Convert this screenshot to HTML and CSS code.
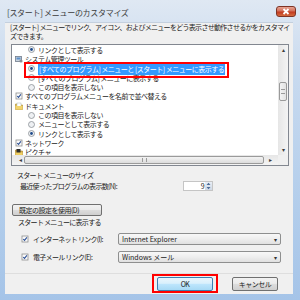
FILE: index.html
```html
<!DOCTYPE html>
<html lang="ja">
<head>
    <meta charset="UTF-8" />
    <title>[スタート] メニューのカスタマイズ</title>
    <link rel="stylesheet" href="styles.css">
</head>
<body>
    <div class="window">
        <div class="titlebar">
            <span class="title">[スタート] メニューのカスタマイズ</span>
            <span class="close">
                <svg viewBox="0 0 20 11" width="20" height="11"><path d="M7.5 3l5 5M12.5 3l-5 5" stroke="#fff" stroke-width="1.8"/></svg>
            </span>
        </div>

        <div class="client">
            <p class="desc">[スタート] メニューでリンク、アイコン、およびメニューをどう表示させ動作させるかをカスタマイ<br>ズできます。</p>

            <div class="listbox">
                <div class="list-main">
                    <div class="rows">
                        <div class="row sub"><svg class="radio" viewBox="0 0 7 7"><circle cx="3.5" cy="3.5" r="3" class="r-ring"/><circle cx="3.5" cy="3.5" r="1.4" class="r-dot"/></svg>リンクとして表示する</div>
                        <div class="row top">
                            <svg class="ico" viewBox="0 0 8 8"><rect x="0.5" y="1.5" width="6" height="5" fill="#c9d3de" stroke="#6f7c8c" stroke-width=".8"/><rect x="1.5" y="2.5" width="4" height="2" fill="#5c8fc9"/><circle cx="6" cy="6" r="1.6" fill="#8a8f96"/></svg>
                            システム管理ツール
                        </div>
                        <div class="row sub"><svg class="radio" viewBox="0 0 7 7"><circle cx="3.5" cy="3.5" r="3" class="r-ring"/><circle cx="3.5" cy="3.5" r="1.4" class="r-dot"/></svg><span class="sel">[すべてのプログラム] メニューと [スタート] メニューに表示する</span></div>
                        <div class="row sub"><svg class="radio" viewBox="0 0 7 7"><circle cx="3.5" cy="3.5" r="3" class="r-ring"/></svg>[すべてのプログラム] メニューに表示する</div>
                        <div class="row sub"><svg class="radio" viewBox="0 0 7 7"><circle cx="3.5" cy="3.5" r="3" class="r-ring"/></svg>この項目を表示しない</div>
                        <div class="row top"><svg class="ico" viewBox="0 0 8 8"><rect x="1" y="1" width="6" height="6" fill="#fafafa" stroke="#8e8f8f" stroke-width=".8"/><path d="M2.2 4l1.3 1.4 2.4-3" fill="none" stroke="#2a4f95" stroke-width="1.1"/></svg>すべてのプログラムメニューを名前で並べ替える</div>
                        <div class="row top"><svg class="ico" viewBox="0 0 8 8"><path d="M0.5 2h3l1 1h3v4.5h-7z" fill="#e8c65a" stroke="#b08a2a" stroke-width=".6"/><rect x="2" y="1" width="4" height="4" fill="#fff" stroke="#9aa" stroke-width=".4"/><path d="M0.5 4h7v3.5h-7z" fill="#f2d46e"/></svg>ドキュメント</div>
                        <div class="row sub"><svg class="radio" viewBox="0 0 7 7"><circle cx="3.5" cy="3.5" r="3" class="r-ring"/></svg>この項目を表示しない</div>
                        <div class="row sub"><svg class="radio" viewBox="0 0 7 7"><circle cx="3.5" cy="3.5" r="3" class="r-ring"/></svg>メニューとして表示する</div>
                        <div class="row sub"><svg class="radio" viewBox="0 0 7 7"><circle cx="3.5" cy="3.5" r="3" class="r-ring"/><circle cx="3.5" cy="3.5" r="1.4" class="r-dot"/></svg>リンクとして表示する</div>
                        <div class="row top"><svg class="ico" viewBox="0 0 8 8"><rect x="1" y="1" width="6" height="6" fill="#fafafa" stroke="#8e8f8f" stroke-width=".8"/><path d="M2.2 4l1.3 1.4 2.4-3" fill="none" stroke="#2a4f95" stroke-width="1.1"/></svg>ネットワーク</div>
                        <div class="row top"><svg class="ico" viewBox="0 0 8 8"><path d="M0.5 2h3l1 1h3v4.5h-7z" fill="#e2b94a" stroke="#a07a20" stroke-width=".6"/><rect x="1.5" y="1" width="4" height="4" fill="#2b2b2b"/><path d="M0.5 4.5h7v3h-7z" fill="#f0cf62"/></svg>ピクチャ</div>
                        <div class="mark mark-row"></div>
                    </div>
                    <div class="vscroll">
                        <span class="arrow">▴</span>
                        <div class="vtrack"><div class="vthumb"><i></i></div></div>
                        <span class="arrow">▾</span>
                    </div>
                </div>
                <div class="hscroll">
                    <span class="arrow">◂</span>
                    <div class="hthumb"><i></i></div>
                    <span class="arrow">▸</span>
                    <span class="corner"></span>
                </div>
            </div>

            <div class="label size-label">スタート メニューのサイズ</div>
            <div class="line count-row">
                <span>最近使ったプログラムの表示数(N):</span>
                <div class="spin">
                    <span class="spin-val">9</span>
                    <span class="spin-btn">
                        <svg viewBox="0 0 7 10" width="7" height="10"><path d="M1.5 4l2-2.2 2 2.2zM1.5 6l2 2.2 2-2.2z" fill="#4a6a96"/></svg>
                    </span>
                </div>
            </div>
            <button class="btn default-btn">既定の設定を使用(D)</button>

            <div class="label show-label">スタート メニューに表示する</div>
            <div class="line link-row">
                <svg class="cb" viewBox="0 0 8 8"><rect x="1" y="1" width="6" height="6" fill="#fafafa" stroke="#8e8f8f" stroke-width=".8"/><path d="M2.2 4l1.3 1.4 2.4-3" fill="none" stroke="#2a4f95" stroke-width="1.1"/></svg>
                <span>インターネット リンク(I):</span>
                <div class="combo"><span>Internet Explorer</span><b>▾</b></div>
            </div>
            <div class="line link-row">
                <svg class="cb" viewBox="0 0 8 8"><rect x="1" y="1" width="6" height="6" fill="#fafafa" stroke="#8e8f8f" stroke-width=".8"/><path d="M2.2 4l1.3 1.4 2.4-3" fill="none" stroke="#2a4f95" stroke-width="1.1"/></svg>
                <span>電子メール リンク(E):</span>
                <div class="combo"><span>Windows メール</span><b>▾</b></div>
            </div>

            <div class="footer">
                <button class="btn ok">OK</button>
                <button class="btn cancel">キャンセル</button>
                <div class="mark mark-ok"></div>
            </div>
        </div>
    </div>
</body>
</html>
```

FILE: styles.css
```css
body {
    margin: 0;
    font-family: "Noto Sans CJK JP", sans-serif;
    color: #1b1b1b;
}
.window {
    width: 300px;
    height: 300px;
    display: flex;
    flex-direction: column;
    background: linear-gradient(#dfe8f3, #c8daef 25%, #b2cdeb 70%, #a5c4e8);
}
.titlebar {
    height: 22px;
    display: flex;
    align-items: center;
    padding-left: 7px;
    flex-shrink: 0;
}
.title {
    font-size: 8px;
    letter-spacing: -0.3px;
    color: #3a3a3a;
    margin-top: 2px;
}
.close {
    margin-left: auto;
    margin-right: 4px;
    align-self: flex-start;
    margin-top: 6px;
    width: 20px;
    height: 11px;
    border: 1px solid #7e3426;
    border-radius: 3px;
    background: linear-gradient(#e8a493, #d2705a 45%, #c23a20 55%, #d46a3e);
    display: flex;
    box-sizing: border-box;
}
.close svg {
    margin: -1px;
}
.client {
    flex: 1;
    margin: 0 7px 6px 5px;
    background: #f0f0f0;
    display: flex;
    flex-direction: column;
    font-size: 7px;
    letter-spacing: -0.7px;
    border-top: 1px solid #c4d0de;
}
.desc {
    margin: 0;
    padding: 0 4px 0 5px;
    line-height: 9px;
    white-space: nowrap;
}
.listbox {
    margin: 3px 0 0 6px;
    width: 278px;
    height: 122px;
    box-sizing: border-box;
    border: 1px solid #828790;
    background: #fff;
    display: flex;
    flex-direction: column;
    flex-shrink: 0;
}
.list-main {
    flex: 1;
    display: flex;
    min-height: 0;
}
.rows {
    flex: 1;
    position: relative;
    overflow: hidden;
    padding-top: 0.3px;
    letter-spacing: -0.5px;
}
.row {
    height: 9.3px;
    display: flex;
    align-items: center;
    white-space: nowrap;
}
.row.top {
    padding-left: 3px;
}
.row.sub {
    padding-left: 16px;
}
.ico {
    width: 8px;
    height: 8px;
    margin-right: 2px;
    flex-shrink: 0;
}
.radio {
    width: 7px;
    height: 7px;
    margin-right: 3px;
    flex-shrink: 0;
}
.r-ring {
    fill: #eef0f3;
    stroke: #8a8f96;
    stroke-width: 0.8;
}
.r-dot {
    fill: #1f4a8a;
}
.sel {
    background: #3399ff;
    color: #fff;
    padding: 1px 1px;
}
.mark {
    position: absolute;
    border: 2px solid #ff0000;
    box-sizing: border-box;
}
.mark-row {
    left: 12px;
    top: 17px;
    width: 205px;
    height: 16px;
}
.vscroll {
    width: 10px;
    background: linear-gradient(90deg, #e6e6e6, #f4f4f4);
    display: flex;
    flex-direction: column;
    align-items: center;
}
.arrow {
    font-size: 6px;
    letter-spacing: 0;
    color: #3c3c3c;
    line-height: 10px;
    height: 10px;
}
.vtrack {
    flex: 1;
    width: 100%;
    padding-top: 27px;
}
.vthumb {
    width: 8px;
    height: 19px;
    margin: 0 auto;
    border: 1px solid #9a9a9a;
    border-radius: 2px;
    box-sizing: border-box;
    background: linear-gradient(90deg, #f3f3f3, #e2e2e2);
    display: flex;
    align-items: center;
    justify-content: center;
}
.vthumb i {
    width: 4px;
    height: 3px;
    border-top: 1px solid #9a9a9a;
    border-bottom: 1px solid #9a9a9a;
}
.hscroll {
    height: 10px;
    display: flex;
    align-items: center;
    background: linear-gradient(#e6e6e6, #f4f4f4);
    padding-left: 2px;
}
.hthumb {
    width: 240px;
    height: 8px;
    margin-left: 2px;
    border: 1px solid #9a9a9a;
    border-radius: 2px;
    box-sizing: border-box;
    background: linear-gradient(#f3f3f3, #dcdcdc);
    display: flex;
    align-items: center;
    justify-content: center;
}
.hthumb i {
    width: 3px;
    height: 4px;
    border-left: 1px solid #9a9a9a;
    border-right: 1px solid #9a9a9a;
}
.hscroll .arrow {
    margin-left: 5px;
}
.corner {
    margin-left: auto;
    width: 10px;
    height: 10px;
    background: #f0f0f0;
}
.label {
    line-height: 10px;
    height: 10px;
}
.size-label {
    margin: 4px 0 0 12px;
}
.line {
    display: flex;
    align-items: center;
}
.count-row {
    height: 11px;
    padding-left: 15px;
}
.spin {
    margin-left: auto;
    margin-right: 80px;
    width: 30px;
    height: 10px;
    display: flex;
    background: #fff;
    border: 1px solid #c5c5c5;
    box-sizing: border-box;
}
.spin-val {
    flex: 1;
    text-align: right;
    line-height: 8px;
    padding-right: 1px;
}
.spin-btn {
    width: 7px;
    background: linear-gradient(#e8eef6, #cfd9e6);
    display: flex;
}
.spin-btn svg {
    margin-top: -1px;
}
.btn {
    font-family: "Noto Sans CJK JP", sans-serif;
    font-size: 7px;
    letter-spacing: -0.5px;
    color: #1b1b1b;
    padding: 0;
    border: 1px solid #707070;
    border-radius: 2px;
    background: linear-gradient(#f2f2f2, #ebebeb 45%, #dddddd 50%, #cfcfcf);
    box-sizing: border-box;
}
.default-btn {
    margin: 13px 0 0 7px;
    width: 90px;
    height: 12px;
    text-align: left;
    padding-left: 6px;
    line-height: 10px;
}
.show-label {
    margin: 1px 0 0 13px;
}
.link-row {
    height: 12px;
    margin-top: 6px;
    padding-left: 16px;
}
.cb {
    width: 8px;
    height: 8px;
    margin-right: 4px;
}
.combo {
    margin-left: auto;
    margin-right: 12px;
    width: 163px;
    height: 12px;
    box-sizing: border-box;
    border: 1px solid #8e8f8f;
    border-radius: 2px;
    background: linear-gradient(#f8f8f8, #eeeeee 50%, #e0e0e0);
    display: flex;
    align-items: center;
    padding: 0 3px;
    letter-spacing: 0;
}
.combo b {
    margin-left: auto;
    font-size: 6px;
    font-weight: normal;
    color: #333;
}
.footer {
    margin-top: 10px;
    border-top: 1px solid #dedede;
    padding-top: 3px;
    display: flex;
    position: relative;
}
.ok {
    margin-left: 152px;
    width: 56px;
    height: 14px;
    border-color: #3c7fb1;
    background: linear-gradient(#eaf6fd, #d9f0fc 45%, #bee6fd 50%, #a7d9f5);
}
.cancel {
    margin-left: 19px;
    width: 46px;
    height: 14px;
}
.mark-ok {
    left: 147px;
    top: 0px;
    width: 66px;
    height: 19px;
}
```
